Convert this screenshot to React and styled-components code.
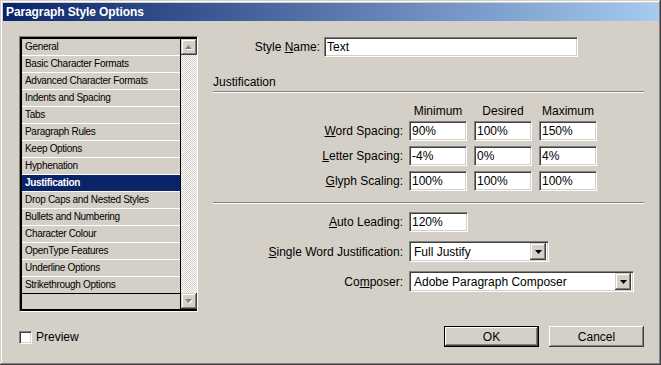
import styled, { createGlobalStyle } from "styled-components";

const GlobalStyle = createGlobalStyle`
  body {
    margin: 0;
    background: #d4d0c8;
    font-family: "Liberation Sans", Arial, sans-serif;
    color: #000;
  }
`;

const sections = [
  "General",
  "Basic Character Formats",
  "Advanced Character Formats",
  "Indents and Spacing",
  "Tabs",
  "Paragraph Rules",
  "Keep Options",
  "Hyphenation",
  "Justification",
  "Drop Caps and Nested Styles",
  "Bullets and Numbering",
  "Character Colour",
  "OpenType Features",
  "Underline Options",
  "Strikethrough Options",
];

const spacingRows = [
  { key: "W", rest: "ord Spacing:", values: ["90%", "100%", "150%"] },
  { key: "L", rest: "etter Spacing:", values: ["-4%", "0%", "4%"] },
  { key: "G", rest: "lyph Scaling:", values: ["100%", "100%", "100%"] },
];

export default function App() {
  return (
    <>
      <GlobalStyle />
      <Window>
        <TitleBar>Paragraph Style Options</TitleBar>
        <Body>
          <LeftColumn>
            <ListFrame>
              <ListInner>
                <Items>
                  {sections.map((s, i) => (
                    <Item key={s} selected={s === "Justification"} last={i === sections.length - 1}>
                      {s}
                    </Item>
                  ))}
                  <EmptyRow />
                </Items>
                <ScrollBar>
                  <ScrollButton>
                    <DisabledArrow up />
                  </ScrollButton>
                  <Track />
                  <ScrollButton>
                    <DisabledArrow />
                  </ScrollButton>
                </ScrollBar>
              </ListInner>
            </ListFrame>
            <CheckRow>
              <CheckBox />
              Preview
            </CheckRow>
          </LeftColumn>

          <RightColumn>
            <StyleRow>
              <Label width={107} gap={4}>
                Style <u>N</u>ame:
              </Label>
              <TextField width={254} readOnly value="Text" />
            </StyleRow>

            <SectionTitle>Justification</SectionTitle>

            <HeaderRow>
              <Label width={190} gap={6} />
              <Cells>
                <ColHead>Minimum</ColHead>
                <ColHead>Desired</ColHead>
                <ColHead>Maximum</ColHead>
              </Cells>
            </HeaderRow>

            {spacingRows.map((r, idx) => (
              <FieldRow key={r.key} first={idx === 0}>
                <Label width={190} gap={6}>
                  <u>{r.key}</u>
                  {r.rest}
                </Label>
                <Cells>
                  {r.values.map((v, i) => (
                    <TextField key={i} width={58} readOnly value={v} />
                  ))}
                </Cells>
              </FieldRow>
            ))}

            <Separator />

            <OptionRow>
              <Label width={190} gap={6}>
                <u>A</u>uto Leading:
              </Label>
              <TextField width={59} readOnly value="120%" />
            </OptionRow>

            <OptionRow>
              <Label width={190} gap={6}>
                <u>S</u>ingle Word Justification:
              </Label>
              <Select width={140}>
                <SelectText>Full Justify</SelectText>
                <DropButton>
                  <DropArrow />
                </DropButton>
              </Select>
            </OptionRow>

            <OptionRow>
              <Label width={190} gap={6}>
                Co<u>m</u>poser:
              </Label>
              <Select width={225}>
                <SelectText>Adobe Paragraph Composer</SelectText>
                <DropButton>
                  <DropArrow />
                </DropButton>
              </Select>
            </OptionRow>

            <ButtonRow>
              <PushButton isDefault>OK</PushButton>
              <PushButton>Cancel</PushButton>
            </ButtonRow>
          </RightColumn>
        </Body>
      </Window>
    </>
  );
}

function DropArrow() {
  return (
    <svg width="7" height="4" viewBox="0 0 7 4">
      <path d="M0 0H7L3.5 4Z" fill="#000" />
    </svg>
  );
}

function DisabledArrow({ up }) {
  const d = up ? "M0 4H7L3.5 0Z" : "M0 0H7L3.5 4Z";
  return (
    <svg width="8" height="5" viewBox="0 0 8 5">
      <path d={d} fill="#fff" transform="translate(1 1)" />
      <path d={d} fill="#808080" />
    </svg>
  );
}

const Window = styled.div`
  box-sizing: border-box;
  width: 661px;
  height: 365px;
  padding: 3px 2px 3px 3px;
  background: #d4d0c8;
  box-shadow: inset -1px -1px #404040, inset 1px 1px #d4d0c8,
    inset -2px -2px #808080, inset 2px 2px #fff;
  display: flex;
  flex-direction: column;
`;

const TitleBar = styled.div`
  height: 18px;
  display: flex;
  align-items: center;
  padding-left: 3px;
  background: linear-gradient(to right, #0a246a, #a6caf0);
  color: #fff;
  font-weight: bold;
  font-size: 12px;
  letter-spacing: -0.1px;
`;

const Body = styled.div`
  flex: 1;
  display: flex;
  padding: 15px 0 0 16px;
`;

const LeftColumn = styled.div`
  width: 179px;
  display: flex;
  flex-direction: column;
`;

const ListFrame = styled.div`
  box-sizing: border-box;
  height: 276px;
  border: 1px solid;
  border-color: #808080 #fff #fff #808080;
  display: flex;
`;

const ListInner = styled.div`
  flex: 1;
  display: flex;
  border-top: 2px solid #000;
  border-left: 2px solid #000;
  border-bottom: 2px solid #000;
`;

const Items = styled.div`
  width: 158px;
  display: flex;
  flex-direction: column;
  border-right: 1px solid #000;
`;

const Item = styled.div`
  height: 16px;
  line-height: 16px;
  padding-left: 3px;
  font-size: 10px;
  letter-spacing: -0.3px;
  white-space: nowrap;
  border-bottom: 1px solid ${(p) => (p.last ? "#000" : "#fff")};
  background: ${(p) => (p.selected ? "#0a246a" : "#d4d0c8")};
  color: ${(p) => (p.selected ? "#fff" : "#000")};
  font-weight: ${(p) => (p.selected ? "bold" : "normal")};
`;

const EmptyRow = styled.div`
  flex: 1;
`;

const ScrollBar = styled.div`
  width: 16px;
  display: flex;
  flex-direction: column;
`;

const ScrollButton = styled.div`
  box-sizing: border-box;
  height: 16px;
  display: flex;
  align-items: center;
  justify-content: center;
  background: #d4d0c8;
  box-shadow: inset -1px -1px #404040, inset 1px 1px #d4d0c8,
    inset -2px -2px #808080, inset 2px 2px #fff;
`;

const Track = styled.div`
  flex: 1;
  background-image: conic-gradient(#fff 25%, #d4d0c8 0 50%, #fff 0 75%, #d4d0c8 0);
  background-size: 2px 2px;
`;

const CheckRow = styled.div`
  display: flex;
  align-items: center;
  gap: 4px;
  margin-top: 18px;
  font-size: 12px;
`;

const CheckBox = styled.div`
  box-sizing: border-box;
  width: 13px;
  height: 13px;
  background: #fff;
  border: 1px solid;
  border-color: #808080 #fff #fff #808080;
  box-shadow: inset 1px 1px #404040, inset -1px -1px #d4d0c8;
`;

const RightColumn = styled.div`
  width: 431px;
  margin-left: 15px;
  display: flex;
  flex-direction: column;
  font-size: 12px;
`;

const Label = styled.div`
  box-sizing: border-box;
  width: ${(p) => p.width + p.gap}px;
  padding-right: ${(p) => p.gap}px;
  text-align: right;
  white-space: nowrap;
  flex-shrink: 0;
`;

const TextField = styled.input`
  box-sizing: border-box;
  width: ${(p) => p.width}px;
  height: 20px;
  margin: 0;
  padding: 0 2px;
  font-family: "Liberation Sans", Arial, sans-serif;
  font-size: 12px;
  color: #000;
  background: #fff;
  border: 1px solid;
  border-color: #808080 #fff #fff #808080;
  box-shadow: inset 1px 1px #404040, inset -1px -1px #d4d0c8;
  outline: none;
`;

const StyleRow = styled.div`
  display: flex;
  align-items: center;
  margin-top: 1px;
`;

const SectionTitle = styled.div`
  margin-top: 18px;
  line-height: 14px;
  padding-bottom: 2px;
  border-bottom: 1px solid #808080;
  box-shadow: 0 1px #fff;
`;

const HeaderRow = styled.div`
  display: flex;
  margin-top: 12px;
  line-height: 14px;
`;

const Cells = styled.div`
  display: flex;
  gap: 7px;
`;

const ColHead = styled.div`
  width: 58px;
  text-align: center;
`;

const FieldRow = styled.div`
  display: flex;
  align-items: center;
  margin-top: ${(p) => (p.first ? 3 : 5)}px;
`;

const Separator = styled.div`
  margin-top: 11px;
  height: 1px;
  background: #808080;
  box-shadow: 0 1px #fff;
`;

const OptionRow = styled.div`
  display: flex;
  align-items: center;
  margin-top: 9px;
`;

const Select = styled.div`
  box-sizing: border-box;
  width: ${(p) => p.width}px;
  height: 21px;
  display: flex;
  align-items: center;
  background: #fff;
  border: 1px solid;
  border-color: #808080 #fff #fff #808080;
  box-shadow: inset 1px 1px #404040, inset -1px -1px #d4d0c8;
  padding: 2px;
`;

const SelectText = styled.div`
  flex: 1;
  padding-left: 2px;
  white-space: nowrap;
`;

const DropButton = styled.div`
  box-sizing: border-box;
  width: 16px;
  height: 17px;
  display: flex;
  align-items: center;
  justify-content: center;
  background: #d4d0c8;
  box-shadow: inset -1px -1px #404040, inset 1px 1px #d4d0c8,
    inset -2px -2px #808080, inset 2px 2px #fff;
`;

const ButtonRow = styled.div`
  display: flex;
  justify-content: flex-end;
  gap: 10px;
  margin-top: 34px;
`;

const PushButton = styled.div`
  box-sizing: border-box;
  width: 95px;
  height: 21px;
  display: flex;
  align-items: center;
  justify-content: center;
  background: #d4d0c8;
  border: ${(p) => (p.isDefault ? "1px solid #000" : "none")};
  box-shadow: inset -1px -1px #404040, inset 1px 1px #fff,
    inset -2px -2px #808080, inset 2px 2px #d4d0c8;
`;
